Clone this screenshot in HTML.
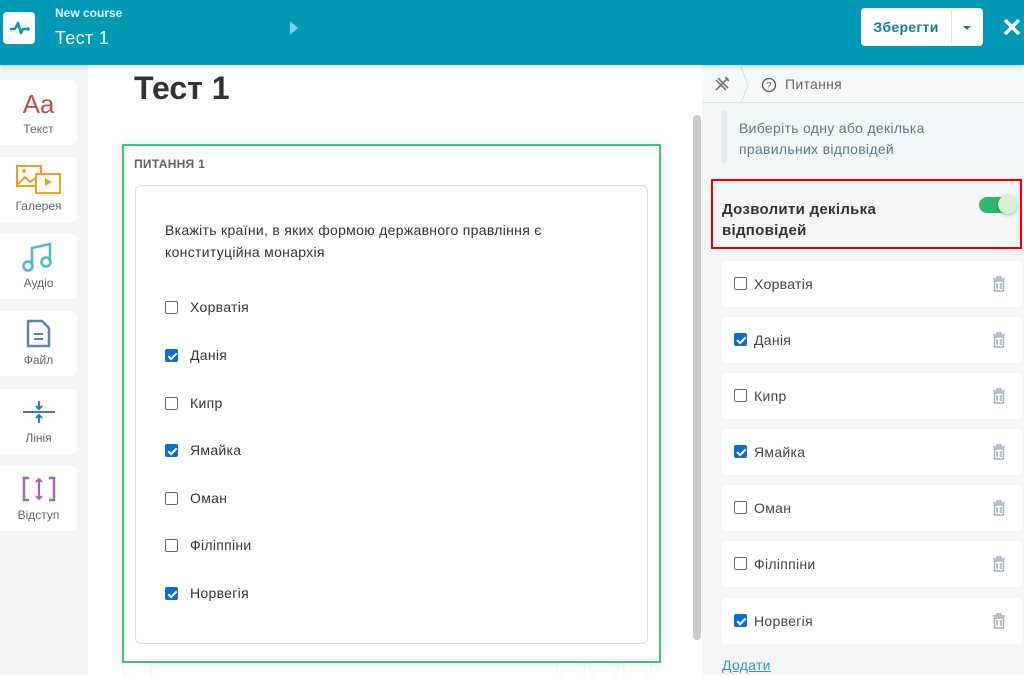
<!DOCTYPE html>
<html><head><meta charset="utf-8"><style>
*{box-sizing:border-box;margin:0;padding:0}
body{width:1024px;height:675px;overflow:hidden;font-family:"Liberation Sans",sans-serif;background:#fff;position:relative;color:#333;letter-spacing:0.3px}
.hdr{position:absolute;left:0;top:0;width:1024px;height:65px;background:#0099b6;box-shadow:0 2px 4px rgba(0,0,0,.15);z-index:2}
.abs{position:absolute}
.side{position:absolute;left:0;top:65px;width:88px;height:610px;background:#f3f5f5}
.card{position:absolute;left:0;width:77px;height:65px;background:#fff;border-radius:0 6px 6px 0;text-align:center;font-size:12px;color:#666;letter-spacing:0}
.card span{position:absolute;left:0;right:0;bottom:9px}
.right{position:absolute;left:702px;top:65px;width:322px;height:610px;background:#f4f6f6}
.ans{position:absolute;left:722px;width:300px;height:46px;background:#fff;border-radius:4px;font-size:14px;color:#444}
.cb{position:absolute;width:13px;height:13px;border:1px solid #666;border-radius:2px;background:#fff}
.cb.on{background:#0b6bd8;border-color:#0b6bd8}
.cb.on:after{content:"";position:absolute;left:3.5px;top:0.5px;width:3px;height:7px;border:solid #fff;border-width:0 2px 2px 0;transform:rotate(45deg)}
.opt{position:absolute;left:165px;font-size:14px;color:#333}
.opt .cb{left:0;top:2px}
.opt b{font-weight:normal;position:absolute;left:25px;top:0;white-space:nowrap}
.trash{position:absolute;right:16px;top:15px}
</style></head><body>
<div class="hdr">
 <div class="abs" style="left:3px;top:12px;width:32px;height:32px;background:#fff;border-radius:4px">
  <svg width="32" height="32"><path d="M7 17h5l3-6 3 10 2-4h5" stroke="#0099b6" stroke-width="2.5" fill="none" stroke-linejoin="round"/><circle cx="25" cy="17" r="1.8" fill="#0099b6"/></svg>
 </div>
 <div class="abs" style="left:55px;top:6px;color:#e6f6fa;font-size:12px;font-weight:bold;letter-spacing:0">New course</div>
 <div class="abs" style="left:55px;top:28px;color:#fff;font-size:18px">Тест 1</div>
 <svg class="abs" style="left:289px;top:20px" width="10" height="16"><path d="M1 1l8 7-8 7z" fill="#7fd0e0"/></svg>
 <div class="abs" style="left:861px;top:8px;width:122px;height:38px;background:#fff;border-radius:4px">
  <div class="abs" style="left:0;width:90px;top:11px;text-align:center;font-weight:bold;font-size:14px;color:#117d94">Зберегти</div>
  <div class="abs" style="left:90px;top:2px;width:1px;height:34px;background:#e4e4e4"></div>
  <svg class="abs" style="left:101px;top:17px" width="10" height="6"><path d="M1 1h8l-4 4z" fill="#117d94"/></svg>
 </div>
 <svg class="abs" style="left:1002px;top:17px" width="20" height="20"><path d="M3 3l14 14M17 3L3 17" stroke="#fff" stroke-width="3.5"/></svg>
</div>
<div class="side">
 <div class="card" style="top:15px"><div class="abs" style="left:0;right:0;top:9px;font-size:26px;color:#c0504d">Aa</div><span>Текст</span></div>
 <div class="card" style="top:92px"><svg class="abs" style="left:16px;top:8px" width="46" height="32"><rect x="1" y="1" width="24" height="20" fill="#fff" stroke="#f0a020" stroke-width="2"/><path d="M2 19l7-7 5 5 4-3 6 5" stroke="#f0a020" stroke-width="2" fill="none"/><circle cx="8" cy="6" r="2" fill="#f0a020"/><rect x="20" y="9" width="24" height="19" fill="#fff" stroke="#f0a020" stroke-width="2"/><path d="M29 13v8l7-4z" fill="#f0a020"/></svg><span>Галерея</span></div>
 <div class="card" style="top:169px"><svg class="abs" style="left:22px;top:8px" width="32" height="32"><path d="M10 24V6l18-4v18" stroke="#4ab8d4" stroke-width="2.5" fill="none"/><circle cx="6" cy="24" r="4.5" stroke="#4ab8d4" stroke-width="2.5" fill="none"/><circle cx="24" cy="20" r="4.5" stroke="#4ab8d4" stroke-width="2.5" fill="none"/></svg><span>Аудіо</span></div>
 <div class="card" style="top:246px"><svg class="abs" style="left:26px;top:8px" width="26" height="30"><path d="M2 2h14l7 7v18H2z" stroke="#5b88a0" stroke-width="2.5" fill="none" stroke-linejoin="round"/><path d="M8 15h9M8 20h9" stroke="#5b88a0" stroke-width="2"/></svg><span>Файл</span></div>
 <div class="card" style="top:324px"><svg class="abs" style="left:22px;top:10px" width="34" height="26"><path d="M1 13h32" stroke="#2f7fb0" stroke-width="2"/><path d="M17 2v7M17 17v7M14 7l3 3 3-3M14 19l3-3 3 3" stroke="#2f7fb0" stroke-width="2" fill="none"/></svg><span>Лінія</span></div>
 <div class="card" style="top:401px"><svg class="abs" style="left:22px;top:10px" width="34" height="26"><path d="M7 2H2v22h5M27 2h5v22h-5" stroke="#b060b0" stroke-width="2.5" fill="none"/><path d="M17 3v20M14 6l3-3 3 3M14 20l3 3 3-3" stroke="#b060b0" stroke-width="2" fill="none"/></svg><span>Відступ</span></div>
</div>
<div class="abs" style="left:134px;top:70px;font-size:32px;font-weight:bold;color:#333;letter-spacing:0">Тест 1</div>
<div class="abs" style="left:122px;top:144px;width:539px;height:519px;border:2px solid #3cc47c;box-shadow:0 0 8px rgba(60,196,124,.25)"></div>
<div class="abs" style="left:134px;top:157px;font-size:12px;font-weight:bold;color:#5a6670">ПИТАННЯ 1</div>
<div class="abs" style="left:135px;top:185px;width:513px;height:459px;border:1px solid #d4e2df;border-radius:6px"></div>
<div class="abs" style="left:165px;top:219px;font-size:14px;line-height:22px;color:#333;width:400px">Вкажіть країни, в яких формою державного правління є конституційна монархія</div>
<div class="opt" style="top:299px"><div class="cb"></div><b>Хорватія</b></div>
<div class="opt" style="top:347px"><div class="cb on"></div><b>Данія</b></div>
<div class="opt" style="top:395px"><div class="cb"></div><b>Кипр</b></div>
<div class="opt" style="top:442px"><div class="cb on"></div><b>Ямайка</b></div>
<div class="opt" style="top:490px"><div class="cb"></div><b>Оман</b></div>
<div class="opt" style="top:537px"><div class="cb"></div><b>Філіппіни</b></div>
<div class="opt" style="top:585px"><div class="cb on"></div><b>Норвегія</b></div>
<div class="abs" style="left:124px;top:663px;width:26px;height:14px;background:#fff;border-radius:5px;box-shadow:0 0 3px rgba(0,0,0,.1)"></div>
<div class="abs" style="left:558px;top:663px;width:26px;height:14px;background:#fff;border-radius:5px;box-shadow:0 0 3px rgba(0,0,0,.1)"></div>
<div class="abs" style="left:591px;top:663px;width:26px;height:14px;background:#fff;border-radius:5px;box-shadow:0 0 3px rgba(0,0,0,.1)"></div>
<div class="abs" style="left:624px;top:663px;width:26px;height:14px;background:#fff;border-radius:5px;box-shadow:0 0 3px rgba(0,0,0,.1)"></div>
<div class="abs" style="left:693px;top:115px;width:8px;height:525px;background:#c9c9c9;border-radius:4px"></div>
<div class="right">
 <div class="abs" style="left:0;top:0;width:322px;height:38px;border-bottom:1px solid #dde6e6;background:#f6f8f8"></div>
 <svg class="abs" style="left:11px;top:10px" width="18" height="18"><path d="M3 15L15 3M5 3l10 10M3 5l10 10M12 2l4 4" stroke="#777" stroke-width="1.6" fill="none"/></svg>
 <svg class="abs" style="left:38px;top:2px" width="10" height="36"><path d="M1 0l7 18-7 18" stroke="#d6dede" fill="none"/></svg>
 <svg class="abs" style="left:59px;top:12px" width="16" height="16"><circle cx="8" cy="8" r="6.5" stroke="#555" stroke-width="1.3" fill="none"/><text x="8" y="11.5" font-size="9" text-anchor="middle" fill="#555" font-family="Liberation Sans">?</text></svg>
 <div class="abs" style="left:83px;top:11px;font-size:14px;color:#666">Питання</div>
 <div class="abs" style="left:20px;top:46px;width:302px;height:52px;background:#f2f7f9;border-left:5px solid #e2eaed;padding:7px 12px;font-size:14px;line-height:21px;color:#5a7a8c"><div style="width:200px">Виберіть одну або декілька правильних відповідей</div></div>
 <div class="abs" style="left:9px;top:114px;width:311px;height:70px;border:2px solid #ee0000"></div>
 <div class="abs" style="left:20px;top:134px;font-size:15px;line-height:21px;font-weight:bold;color:#333">Дозволити декілька<br>відповідей</div>
 <div class="abs" style="left:277px;top:132px;width:34px;height:16px;border-radius:8px;background:#2fb56e"></div>
 <div class="abs" style="left:296px;top:130px;width:19px;height:19px;border-radius:50%;background:#d9f0d2;box-shadow:0 1px 3px rgba(0,0,0,.3)"></div>
 <div class="abs" style="left:20px;top:592px;font-size:14px;color:#2a9bb5;text-decoration:underline">Додати</div>
</div>
<div class="ans" style="top:261px"><div class="cb" style="left:12px;top:16px"></div><span class="abs" style="left:32px;top:15px">Хорватія</span><svg class="trash" width="14" height="16"><path d="M1 3h12M5 3V1h4v2M2.5 5h9v10h-9zM5 7v6M9 7v6" stroke="#9fb3bd" stroke-width="1.5" fill="none"/></svg></div>
<div class="ans" style="top:317px"><div class="cb on" style="left:12px;top:16px"></div><span class="abs" style="left:32px;top:15px">Данія</span><svg class="trash" width="14" height="16"><path d="M1 3h12M5 3V1h4v2M2.5 5h9v10h-9zM5 7v6M9 7v6" stroke="#9fb3bd" stroke-width="1.5" fill="none"/></svg></div>
<div class="ans" style="top:373px"><div class="cb" style="left:12px;top:16px"></div><span class="abs" style="left:32px;top:15px">Кипр</span><svg class="trash" width="14" height="16"><path d="M1 3h12M5 3V1h4v2M2.5 5h9v10h-9zM5 7v6M9 7v6" stroke="#9fb3bd" stroke-width="1.5" fill="none"/></svg></div>
<div class="ans" style="top:429px"><div class="cb on" style="left:12px;top:16px"></div><span class="abs" style="left:32px;top:15px">Ямайка</span><svg class="trash" width="14" height="16"><path d="M1 3h12M5 3V1h4v2M2.5 5h9v10h-9zM5 7v6M9 7v6" stroke="#9fb3bd" stroke-width="1.5" fill="none"/></svg></div>
<div class="ans" style="top:485px"><div class="cb" style="left:12px;top:16px"></div><span class="abs" style="left:32px;top:15px">Оман</span><svg class="trash" width="14" height="16"><path d="M1 3h12M5 3V1h4v2M2.5 5h9v10h-9zM5 7v6M9 7v6" stroke="#9fb3bd" stroke-width="1.5" fill="none"/></svg></div>
<div class="ans" style="top:541px"><div class="cb" style="left:12px;top:16px"></div><span class="abs" style="left:32px;top:15px">Філіппіни</span><svg class="trash" width="14" height="16"><path d="M1 3h12M5 3V1h4v2M2.5 5h9v10h-9zM5 7v6M9 7v6" stroke="#9fb3bd" stroke-width="1.5" fill="none"/></svg></div>
<div class="ans" style="top:598px"><div class="cb on" style="left:12px;top:16px"></div><span class="abs" style="left:32px;top:15px">Норвегія</span><svg class="trash" width="14" height="16"><path d="M1 3h12M5 3V1h4v2M2.5 5h9v10h-9zM5 7v6M9 7v6" stroke="#9fb3bd" stroke-width="1.5" fill="none"/></svg></div>
</body></html>
